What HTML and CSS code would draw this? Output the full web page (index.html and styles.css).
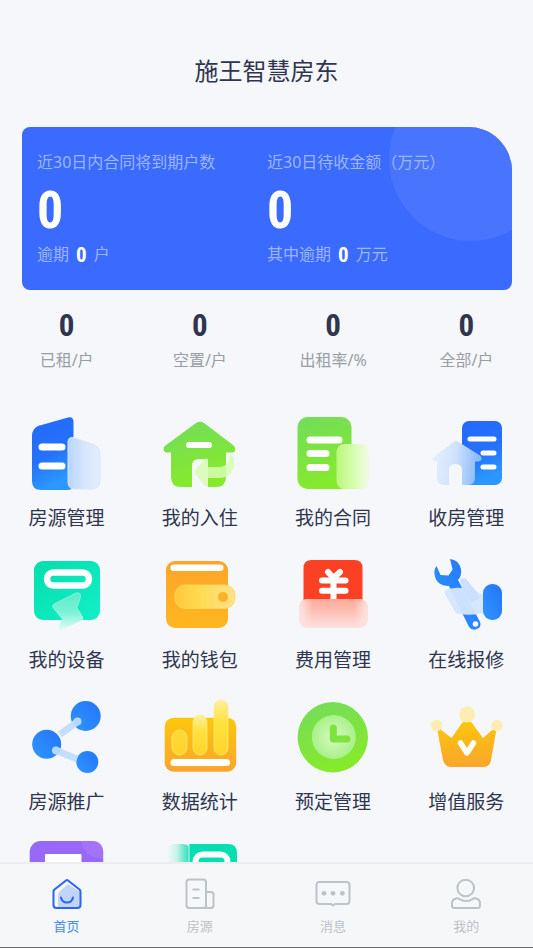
FILE: index.html
```html
<!DOCTYPE html>
<html lang="zh-CN">
<head>
<meta charset="utf-8">
<meta name="viewport" content="width=device-width, initial-scale=1">
<title>施王智慧房东</title>
<link rel="stylesheet" href="styles.css">
</head>
<body>
<svg class="defs" aria-hidden="true">
  <defs>
    <linearGradient id="blue" x1="0" y1="0" x2=".3" y2="1"><stop offset="0" stop-color="#2468fb"/><stop offset=".6" stop-color="#2472fc"/><stop offset="1" stop-color="#2c98fd"/></linearGradient>
    <linearGradient id="sky" x1="1" y1="0" x2="0" y2="1"><stop offset="0" stop-color="#2474fc"/><stop offset="1" stop-color="#2e96fd"/></linearGradient>
    <linearGradient id="green" x1="0" y1="0" x2=".3" y2="1"><stop offset="0" stop-color="#72dc5c"/><stop offset="1" stop-color="#86ea2c"/></linearGradient>
    <linearGradient id="teal" x1="0" y1="0" x2="1" y2="1"><stop offset="0" stop-color="#04deac"/><stop offset="1" stop-color="#12f0c8"/></linearGradient>
    <linearGradient id="orange" x1="0" y1="0" x2="0" y2="1"><stop offset="0" stop-color="#fda42c"/><stop offset="1" stop-color="#ffb71e"/></linearGradient>
    <linearGradient id="gold" x1="0" y1="0" x2="0" y2="1"><stop offset="0" stop-color="#fcc70c"/><stop offset="1" stop-color="#fba52c"/></linearGradient>
    <linearGradient id="ice" x1="0" y1="0" x2="1" y2="0"><stop offset="0" stop-color="#b7d5fd"/><stop offset=".5" stop-color="#d6e6fc"/><stop offset="1" stop-color="#e3eefe"/></linearGradient>
    <linearGradient id="iceLeft" x1="0" y1="0" x2="1" y2=".1"><stop offset="0" stop-color="#e9f1fd"/><stop offset=".5" stop-color="#cfe2fb"/><stop offset="1" stop-color="#86b9fc"/></linearGradient>
    <linearGradient id="lime" x1="0" y1="0" x2="1" y2="0"><stop offset="0" stop-color="#b9f77c"/><stop offset=".5" stop-color="#d6fcac"/><stop offset="1" stop-color="#f2fbea"/></linearGradient>
    <linearGradient id="strap" x1="0" y1="0" x2="1" y2="0"><stop offset="0" stop-color="#ffc83a"/><stop offset=".45" stop-color="#ffdc54"/><stop offset="1" stop-color="#ffe08a"/></linearGradient>
    <linearGradient id="mint" x1="0" y1="0" x2="0" y2="1"><stop offset="0" stop-color="#5cecc8"/><stop offset=".5" stop-color="#7af2d6"/><stop offset="1" stop-color="#effaf9"/></linearGradient>
    <linearGradient id="blush" x1="0" y1="0" x2="0" y2="1"><stop offset="0" stop-color="#fda898"/><stop offset=".5" stop-color="#fcc4ba"/><stop offset="1" stop-color="#fbe3e0"/></linearGradient>
    <linearGradient id="blushSide" x1="0" y1="0" x2="1" y2="0"><stop offset="0" stop-color="#fce4e0"/><stop offset=".2" stop-color="#fce4e0" stop-opacity="0"/><stop offset=".8" stop-color="#fce4e0" stop-opacity="0"/><stop offset="1" stop-color="#fce4e0"/></linearGradient>
    <linearGradient id="bar" x1="0" y1="0" x2="0" y2="1"><stop offset="0" stop-color="#fff0a0"/><stop offset=".4" stop-color="#ffe23e"/><stop offset="1" stop-color="#ffd42a"/></linearGradient>
    <linearGradient id="barLow" x1="0" y1="0" x2="0" y2="1"><stop offset="0" stop-color="#ffd93a"/><stop offset="1" stop-color="#ffd42a"/></linearGradient>
    <linearGradient id="fade" x1="0" y1="0" x2="1" y2="0"><stop offset="0" stop-color="#f5f7fb"/><stop offset=".4" stop-color="#c8f4ea"/><stop offset="1" stop-color="#14dcb0"/></linearGradient>
    <radialGradient id="dial"><stop offset="0" stop-color="#d4fac0"/><stop offset="1" stop-color="#aaf08a"/></radialGradient>
  </defs>
</svg>
<div class="app">
  <header class="header"><h1 class="title">施王智慧房东</h1></header>
  <main class="content">
    <section class="card">
      <div class="card-col">
        <p class="card-text">近30日内合同将到期户数</p>
        <p class="card-number">0</p>
        <p class="card-text">逾期<b class="inline-number">0</b>户</p>
      </div>
      <div class="card-col">
        <p class="card-text">近30日待收金额（万元）</p>
        <p class="card-number">0</p>
        <p class="card-text">其中逾期<b class="inline-number">0</b>万元</p>
      </div>
    </section>
    <section class="stats">
      <div class="stat"><b class="stat-number">0</b><span class="stat-label">已租/户</span></div>
      <div class="stat"><b class="stat-number">0</b><span class="stat-label">空置/户</span></div>
      <div class="stat"><b class="stat-number">0</b><span class="stat-label">出租率/%</span></div>
      <div class="stat"><b class="stat-number">0</b><span class="stat-label">全部/户</span></div>
    </section>
    <nav class="menu">
      <a class="menu-item" href="#">
        <svg class="menu-icon" viewBox="0 0 80 80"><path fill="url(#blue)" d="M5 23q0-7 6-10L41 4.500q5-1.500 5.500 4V71q0 6-6 6H14q-9 0-9-9z"/><path stroke="#fff" stroke-width="7" stroke-linecap="round" d="M15 34h20M15 53h20"/><path fill="url(#ice)" stroke="#d4e6fe" d="M41 29q0-5 5-4.500L65 31q8 3 8 10v26q0 9-9 9H48q-7 0-7-7z"/></svg>
        <span class="menu-label">房源管理</span>
      </a>
      <a class="menu-item" href="#">
        <svg class="menu-icon" viewBox="0 0 80 80"><path fill="url(#green)" d="M36 10q4-2.500 8 0l29 22q3 3 2 6-1 2-4 1.500h-5V64q0 10-10 10H21q-10 0-10-10V39.500H7q-3 0-3.500-3 0-3 2-4z"/><path fill="#f5f7fb" d="M32 75V53q0-7 7-7h9v29z"/><path fill="#d8fcb0" fill-opacity=".85" d="M36 56l9-10q3-2 3 2v6h11q8 0 10-8l1-4q3 0 4 4v7q-3 12-14 12H48v7q0 3-3 1l-9-11q-2-3 0-6z"/><path stroke="#fff" stroke-width="6" stroke-linecap="round" d="M29 32h20"/></svg>
        <span class="menu-label">我的入住</span>
      </a>
      <a class="menu-item" href="#">
        <svg class="menu-icon" viewBox="0 0 80 80"><rect x="4.500" y="4" width="54" height="72" rx="10" fill="url(#green)"/><path stroke="#fff" stroke-width="7" stroke-linecap="round" d="M17 27h29M17 40.500h16M17 54.500h16"/><rect x="43.500" y="31" width="33" height="45" rx="8" fill="url(#lime)"/></svg>
        <span class="menu-label">我的合同</span>
      </a>
      <a class="menu-item" href="#">
        <svg class="menu-icon" viewBox="0 0 80 80"><rect x="36" y="8" width="40" height="64" rx="7" fill="url(#blue)"/><path stroke="#fff" stroke-width="5" stroke-linecap="round" d="M44 26h24M57 40h11M57 54h11"/><path fill="url(#iceLeft)" d="M27.500 29q2.500-2 5 0L54 42.500q2 1.500 1.500 4-1 2-3.500 2h-3V65q0 7-7 7h-6V57q0-6-6.500-6T23 57v15h-5q-7 0-7-7V48.500H8q-3-2-1-4z"/></svg>
        <span class="menu-label">收房管理</span>
      </a>
      <a class="menu-item" href="#">
        <svg class="menu-icon" viewBox="0 0 80 80"><rect x="7" y="6" width="66" height="59" rx="9" fill="url(#teal)"/><rect x="20" y="17.500" width="42" height="13" rx="6.500" fill="none" stroke="#fff" stroke-width="6.500"/><path fill="url(#mint)" d="M27 49l22-11q5-1 4.500 4L50 53l6 9q1 3-3 4L33 76q-3 1-2-2l4-10-8-10q-3-3 0-5z"/><path fill="none" stroke="#a4f6e2" stroke-opacity=".7" d="M36 64l-9-10q-3-3 0-5l22-11q5-1 4.500 4L50 53l6 10"/></svg>
        <span class="menu-label">我的设备</span>
      </a>
      <a class="menu-item" href="#">
        <svg class="menu-icon" viewBox="0 0 80 80"><rect x="6" y="6" width="62" height="67" rx="9" fill="url(#orange)"/><rect x="10.500" y="9.500" width="53" height="6.500" rx="3.200" fill="#fff"/><rect x="15" y="30" width="60" height="23.500" rx="10" fill="url(#strap)" stroke="#ffd863" stroke-opacity=".8"/><circle cx="63" cy="42" r="5" fill="#fdb126"/></svg>
        <span class="menu-label">我的钱包</span>
      </a>
      <a class="menu-item" href="#">
        <svg class="menu-icon" viewBox="0 0 80 80"><path fill="#fc4024" d="M10.500 47V13q0-8 8-8h43q8 0 8 8v34z"/><path fill="none" stroke="#fff" stroke-width="6" stroke-linecap="round" d="M35 17l5.500 6L47 17M29 25.500h23.500M29 35.700h23.500M40.500 23v24"/><rect x="6.500" y="44" width="68" height="29" rx="8" fill="url(#blush)"/><rect x="6.500" y="44" width="68" height="29" rx="8" fill="url(#blushSide)"/></svg>
        <span class="menu-label">费用管理</span>
      </a>
      <a class="menu-item" href="#">
        <svg class="menu-icon" viewBox="0 0 80 80"><path fill="url(#sky)" d="M24 4q9 1 11 10 1 7-3 11l22 42q2 5-3 7-5 2-8-2L23 31Q10 31 8.500 19q-.5-5 2-8l4 9 8 .5 4-6z"/><circle cx="49.500" cy="69" r="2.800" fill="#f5f7fb"/><path fill="#d3e5fd" fill-opacity=".96" d="M20 35q8-3 16-2l-2-8q2-3 6-1l10 12q4 4 8 3v19q-12 3-24 1-5 0-7-6l-8-14q-1-3 1-4z"/><path fill="#b7d5fc" fill-opacity=".3" d="M36 33l-2-8q2-3 6-1l10 12 3 7-8 5z"/><rect x="57" y="29" width="19" height="36" rx="9" fill="url(#sky)"/></svg>
        <span class="menu-label">在线报修</span>
      </a>
      <a class="menu-item" href="#">
        <svg class="menu-icon" viewBox="0 0 80 80"><g fill="url(#sky)"><circle cx="58.700" cy="19" r="15"/><circle cx="19.700" cy="47.300" r="14.500"/><circle cx="60.300" cy="65" r="11"/></g><g stroke="#c4dffd" stroke-width="7"><path d="M33 37.500L50 25"/><path d="M29 53.500L50 62"/></g><circle cx="50.500" cy="24.500" r="4" fill="#b4d8fe"/><circle cx="29" cy="53.500" r="4" fill="#b4d8fe"/></svg>
        <span class="menu-label">房源推广</span>
      </a>
      <a class="menu-item" href="#">
        <svg class="menu-icon" viewBox="0 0 80 80"><rect x="4.700" y="20.700" width="71.500" height="54" rx="9" fill="url(#gold)"/><rect x="10.500" y="62" width="59.500" height="7" rx="3.500" fill="#fff"/><g fill="url(#bar)" stroke="#ffe98c" stroke-opacity=".7"><rect x="12" y="33" width="15" height="25" rx="7.500" fill="url(#barLow)"/><rect x="33" y="18" width="14" height="40" rx="7"/><rect x="54" y="3" width="14" height="55" rx="7"/></g></svg>
        <span class="menu-label">数据统计</span>
      </a>
      <a class="menu-item" href="#">
        <svg class="menu-icon" viewBox="0 0 80 80"><circle cx="39.800" cy="40.300" r="35.200" fill="url(#green)"/><circle cx="40.800" cy="40" r="22" fill="url(#dial)"/><path fill="none" stroke="#7fe33e" stroke-width="7" stroke-linecap="round" stroke-linejoin="round" d="M40.300 31v11H54"/></svg>
        <span class="menu-label">预定管理</span>
      </a>
      <a class="menu-item" href="#">
        <svg class="menu-icon" viewBox="0 0 80 80"><path fill="url(#gold)" d="M11.500 34q3-3 5 0l9 7L36 26q5-5 10 0l11 15 8-7q4-3 5 1l-5 28q-1 7-8 7H25q-6 0-8-7z"/><g fill="#feedb2"><circle cx="10.700" cy="28.500" r="5.800"/><circle cx="41.200" cy="17.500" r="8"/><circle cx="71" cy="28.500" r="5.800"/></g><path fill="none" stroke="#fff" stroke-width="5.500" stroke-linecap="round" stroke-linejoin="round" d="M34.500 46l6.500 10 6.500-10"/></svg>
        <span class="menu-label">增值服务</span>
      </a>
      <a class="menu-item" href="#">
        <svg class="menu-icon" viewBox="0 0 80 80"><rect x="2.700" y="2" width="73.500" height="74" rx="11" fill="#9868f8"/><path fill="#a87cfb" fill-opacity=".6" d="M54 2h11q11 0 11 11v7q-20-2-22-18z"/><rect x="18" y="15" width="36.500" height="40" rx="1" fill="#fff"/></svg>
      </a>
      <a class="menu-item" href="#">
        <svg class="menu-icon" viewBox="0 0 80 80"><rect x="7" y="5" width="24" height="68" rx="8" fill="url(#fade)"/><path fill="#04deb0" d="M29 5h39q9 0 9 9v60H29z"/><path stroke="#c8f8ec" d="M29 5v70"/><rect x="35.500" y="15.500" width="32" height="40" rx="7" fill="none" stroke="#fff" stroke-width="6"/></svg>
      </a>
    </nav>
  </main>
  <nav class="tabs">
    <a class="tab tab-active" href="#">
      <svg class="tab-icon" viewBox="0 0 36 36"><path fill="#c1d4fb" stroke="none" d="M9 17l10-9 12 8v15H9z"/><path d="M4.500 15.500q0-1 1-2L17 4.500q1-1 2 0l11.500 9q1 1 1 2V29q0 3-3 3h-21q-3 0-3-3z"/><path stroke-linecap="round" d="M12 21.500q1 5 6 5t6-5"/></svg>
      <span>首页</span>
    </a>
    <a class="tab" href="#">
      <svg class="tab-icon" viewBox="0 0 36 36"><rect x="4.500" y="3.500" width="19.500" height="28.500" rx="2.500"/><path d="M24 16h5q2.500 0 2.500 2.500v11q0 2.500-2.500 2.500h-6M10.500 13.500h7M10.500 22h7"/></svg>
      <span>房源</span>
    </a>
    <a class="tab" href="#">
      <svg class="tab-icon" viewBox="0 0 36 36"><path d="M4.500 6h27q3 0 3 3v16q0 3-3 3H20l-2 1.500-2-1.500H4.500q-3 0-3-3V9q0-3 3-3z"/><g fill="#bcc3c9" stroke="none"><circle cx="9" cy="17.300" r="2.400"/><circle cx="18" cy="17.300" r="2.400"/><circle cx="27.300" cy="17.300" r="2.400"/></g></svg>
      <span>消息</span>
    </a>
    <a class="tab" href="#">
      <svg class="tab-icon" viewBox="0 0 36 36"><circle cx="17.700" cy="12" r="8.300"/><path d="M8 22.500q2-.5 4 .8 6 3.500 12 0 2-1.300 4-.8 4 1 4 5v2q0 2.500-2.500 2.500h-23Q4 32 4 29.500v-2q0-4 4-5z"/></svg>
      <span>我的</span>
    </a>
  </nav>
</div>
</body>
</html>
```
FILE: styles.css
```css
* {
  box-sizing: border-box;
}

body {
  margin: 0;
  background: #f5f7fb;
  color: #2f354e;
  font-family: "Noto Sans", "Noto Sans CJK SC", sans-serif;
  font-weight: 400;
}

h1,
p {
  margin: 0;
}

a {
  color: inherit;
  text-decoration: none;
}

.defs {
  position: absolute;
  width: 0;
  height: 0;
}

.app {
  display: flex;
  flex-direction: column;
  height: 100vh;
}

.header {
  padding: 53px 16px 39px;
  text-align: center;
}

.title {
  font-size: 24px;
  line-height: 35px;
  font-weight: 400;
}

.content {
  flex: 1;
  min-height: 0;
  overflow-y: auto;
  scrollbar-width: none;
}

.card {
  position: relative;
  display: grid;
  grid-template-columns: 1fr 1fr;
  margin: 0 21px 0 22px;
  padding: 23px 15px;
  border-radius: 8px 44px 8px 8px;
  background: #3a6afe;
  overflow: hidden;
}

.card::before {
  content: "";
  position: absolute;
  top: -50px;
  right: -41px;
  width: 164px;
  height: 164px;
  border-radius: 50%;
  background: #4874fe;
}

.card-col {
  position: relative;
}

.card-text {
  color: #9db6ff;
  font-size: 16px;
  line-height: 24px;
  white-space: nowrap;
}

.card-number,
.inline-number,
.stat-number {
  font-family: "Liberation Sans Narrow", "Roboto Condensed", "DejaVu Sans Condensed", sans-serif;
  font-weight: 700;
}

.card-number {
  margin-top: 6px;
  color: #fff;
  font-size: 52px;
  line-height: 62px;
}

.inline-number {
  margin: 0 7px;
  color: #fff;
  font-size: 21px;
  line-height: 24px;
  vertical-align: -2px;
}

.stats,
.menu,
.tabs {
  display: grid;
  grid-template-columns: repeat(4, 1fr);
}

.stats {
  padding-top: 18px;
}

.stat {
  display: flex;
  flex-direction: column;
  align-items: center;
}

.stat-number {
  font-size: 31px;
  line-height: 36px;
}

.stat-label {
  margin-top: 4px;
  color: #999ea4;
  font-size: 16px;
  line-height: 24px;
}

.menu {
  row-gap: 23px;
  padding: 41px 0 24px;
}

.menu-item {
  display: flex;
  flex-direction: column;
  align-items: center;
  gap: 11px;
}

.menu-icon {
  width: 80px;
  height: 80px;
  fill: none;
}

.menu-label {
  font-size: 19px;
  line-height: 28px;
}

.tabs {
  padding: 12px 0;
  border-top: 2px solid #ededf0;
  border-bottom: 1px solid #68686d;
  background: #f6f7f9;
}

.tab {
  display: flex;
  flex-direction: column;
  align-items: center;
  gap: 5px;
  color: #bcc2c8;
  font-size: 13px;
  line-height: 18px;
}

.tab-active {
  color: #4189f7;
}

.tab-icon {
  width: 36px;
  height: 36px;
  fill: none;
  stroke: #bcc3c9;
  stroke-width: 2;
}

.tab-active .tab-icon {
  stroke: #2c66ee;
}
```
